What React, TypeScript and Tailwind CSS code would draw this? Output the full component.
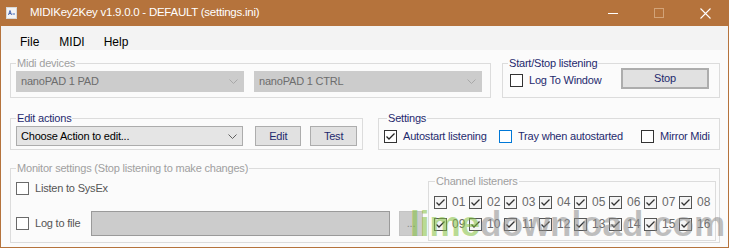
import type { ReactNode } from "react";

const NAVY = "text-[#1f2a6e]";

const Chevron = ({ color }: { color: string }) => (
  <svg width="9" height="5" viewBox="0 0 9 5" className="shrink-0">
    <polyline points="0.5,0.5 4.5,4.5 8.5,0.5" fill="none" stroke={color} strokeWidth="1" />
  </svg>
);

const Tick = ({ color }: { color: string }) => (
  <svg width="11" height="11" viewBox="0 0 11 11">
    <polyline points="1.5,5.5 4,8 9.5,2.5" fill="none" stroke={color} strokeWidth="1.3" />
  </svg>
);

function CheckBox({
  label,
  checked = false,
  box = "border-[#333333] bg-white",
  text = NAVY,
  tick = "#222222",
  className = "",
}: {
  label: string;
  checked?: boolean;
  box?: string;
  text?: string;
  tick?: string;
  className?: string;
}) {
  return (
    <div className={`flex items-center ${className}`}>
      <div className={`w-[13px] h-[13px] border shrink-0 flex items-center justify-center ${box}`}>
        {checked ? <Tick color={tick} /> : null}
      </div>
      <span className={`ml-[6px] leading-[13px] whitespace-nowrap ${text}`}>{label}</span>
    </div>
  );
}

function Group({
  title,
  disabled = false,
  className = "",
  legendClass = "",
  children,
}: {
  title: string;
  disabled?: boolean;
  className?: string;
  legendClass?: string;
  children: ReactNode;
}) {
  return (
    <fieldset className={`border border-[#dcdcdc] min-w-0 ${className}`}>
      <legend
        className={`px-[1px] leading-[13px] whitespace-nowrap ${disabled ? "text-[#a0a0a0]" : NAVY} ${legendClass}`}
      >
        {title}
      </legend>
      {children}
    </fieldset>
  );
}

function Combo({ value, disabled = false, className = "" }: { value: string; disabled?: boolean; className?: string }) {
  return (
    <div
      className={`flex items-center justify-between pl-[4px] pr-[5px] border ${
        disabled ? "bg-[#cccccc] border-[#cccccc] text-[#6d6d6d]" : "bg-[#e5e5e5] border-[#acacac] text-black"
      } ${className}`}
    >
      <span className="whitespace-nowrap">{value}</span>
      <Chevron color={disabled ? "#a8a8a8" : "#606060"} />
    </div>
  );
}

function Button({ label, className = "" }: { label: string; className?: string }) {
  return (
    <div
      className={`flex items-center justify-center bg-[#e1e1e1] border border-[#adadad] ${NAVY} ${className}`}
    >
      {label}
    </div>
  );
}

const channels = Array.from({ length: 16 }, (_, i) => String(i + 1).padStart(2, "0"));

export default function App() {
  return (
    <div
      className="w-[729px] h-[250px] overflow-hidden bg-white relative text-[11px] tracking-[-0.2px]"
      style={{ fontFamily: '"Liberation Sans", Arial, sans-serif' }}
    >
      <div className="h-[248px] flex flex-col border-x border-b border-[#b5733c]">
        {/* title bar */}
        <div className="h-[26px] bg-[#b5733c] flex items-center text-white shrink-0">
          <svg width="11" height="12" viewBox="0 0 11 12" className="ml-[5px]">
            <rect x="0.5" y="0.5" width="10" height="11" fill="#f4f4f4" stroke="#d8d8d8" />
            <path d="M2.5 8 L4 3.5 L5.5 8 M3 6.5 H5" stroke="#3a5aa8" strokeWidth="0.9" fill="none" />
            <rect x="6.5" y="6" width="2.5" height="2" fill="#9ab0d8" />
          </svg>
          <span className="ml-[13px] text-[11.5px] tracking-[-0.25px] whitespace-nowrap">
            MIDIKey2Key v1.9.0.0 - DEFAULT (settings.ini)
          </span>
          <div className="ml-auto flex h-full">
            <div className="w-[46px] flex items-center justify-center">
              <div className="w-[10px] h-px bg-white" />
            </div>
            <div className="w-[46px] flex items-center justify-center">
              <div className="w-[10px] h-[10px] border border-[#d2a378]" />
            </div>
            <div className="w-[46px] flex items-center justify-center">
              <svg width="11" height="11" viewBox="0 0 11 11">
                <path d="M0.5 0.5 L10.5 10.5 M10.5 0.5 L0.5 10.5" stroke="white" strokeWidth="1.1" />
              </svg>
            </div>
          </div>
        </div>

        {/* menu */}
        <div className="h-[24px] bg-[#f3f3f3] flex pt-[8px] text-[12px] leading-[16px] text-black tracking-normal shrink-0">
          <span className="ml-[19px]">File</span>
          <span className="ml-[20px]">MIDI</span>
          <span className="ml-[19px]">Help</span>
        </div>

        {/* body */}
        <div className="flex-1 bg-[#fbfbfb] pl-[9px] pr-[8px]">
          <div className="mt-[7px] flex gap-[11px]">
            <Group title="Midi devices" disabled className="w-[481px] px-[5px] pb-[5px]">
              <div className="mt-[1px] flex gap-[10px]">
                <Combo value="nanoPAD 1 PAD" disabled className="w-[228px] h-[21px]" />
                <Combo value="nanoPAD 1 CTRL" disabled className="w-[228px] h-[21px]" />
              </div>
            </Group>
            <Group title="Start/Stop listening" className="flex-1 px-[5px] pb-[6px]">
              <div className="flex items-start h-[21px]">
                <CheckBox label="Log To Window" className="ml-[2px] mt-[4px]" />
                <Button label="Stop" className="ml-auto mr-[5px] -mt-[2px] w-[88px] h-[21px] border-2 border-[#0078d7]" />
              </div>
            </Group>
          </div>

          <div className="mt-[14px] flex gap-[15px]">
            <Group title="Edit actions" className="w-[353px] px-[5px] pb-[3px]">
              <div className="mt-[1px] flex items-center">
                <Combo value="Choose Action to edit..." className="w-[228px] h-[20px]" />
                <Button label="Edit" className="ml-[12px] w-[46px] h-[20px]" />
                <Button label="Test" className="ml-[9px] w-[47px] h-[20px]" />
              </div>
            </Group>
            <Group title="Settings" legendClass="ml-[3px]" className="flex-1 px-[5px] pb-[3px]">
              <div className="mt-[1px] h-[20px] flex items-center">
                <CheckBox label="Autostart listening" checked className="w-[115px]" />
                <CheckBox label="Tray when autostarted" box="border-[#0078d7] bg-white" className="w-[142px]" />
                <CheckBox label="Mirror Midi" />
              </div>
            </Group>
          </div>

          <Group
            title="Monitor settings (Stop listening to make changes)"
            disabled
            className="mt-[12px] pl-[5px] pr-[3px] pb-[1px]"
          >
            <div className="flex">
              <div className="flex-1 flex flex-col">
                <CheckBox
                  label="Listen to SysEx"
                  box="border-[#6a6a6a] bg-white"
                  text="text-[#555555]"
                  className="mt-[7px]"
                />
                <div className="mt-[16px] h-[25px] flex items-center">
                  <CheckBox
                    label="Log to file"
                    box="border-[#6a6a6a] bg-white"
                    text="text-[#555555]"
                    className="w-[75px]"
                  />
                  <div className="w-[299px] h-[25px] bg-[#cccccc] border border-[#9a9a9a]" />
                  <div className="ml-[9px] w-[24px] h-[25px] bg-[#cccccc] border border-[#c4c4c4] flex items-center justify-center text-[#8a8a8a]">
                    ...
                  </div>
                </div>
              </div>
              <Group title="Channel listeners" disabled legendClass="ml-[1px]" className="w-[288px] px-[5px] pb-[9px]">
                <div className="mt-[8px] grid grid-cols-[repeat(8,35px)] gap-y-[9px]">
                  {channels.map((c) => (
                    <CheckBox
                      key={c}
                      label={c}
                      checked
                      box="border-[#555555] bg-[#f4f4f4]"
                      text="text-[#6a6a6a] text-[12px] tracking-normal"
                      tick="#333333"
                      className="[&>span]:ml-[5px]"
                    />
                  ))}
                </div>
              </Group>
            </div>
          </Group>
        </div>
      </div>

      {/* watermark */}
      <div
        className="absolute left-[410px] top-[206px] text-[35px] leading-[36px] font-bold tracking-normal whitespace-nowrap pointer-events-none"
        style={{ fontFamily: '"Liberation Sans", Arial, sans-serif' }}
      >
        <span className="text-[#7fbf3a]/55">lime</span>
        <span className="text-[#8a8a8a]/55">download.com</span>
      </div>
    </div>
  );
}
